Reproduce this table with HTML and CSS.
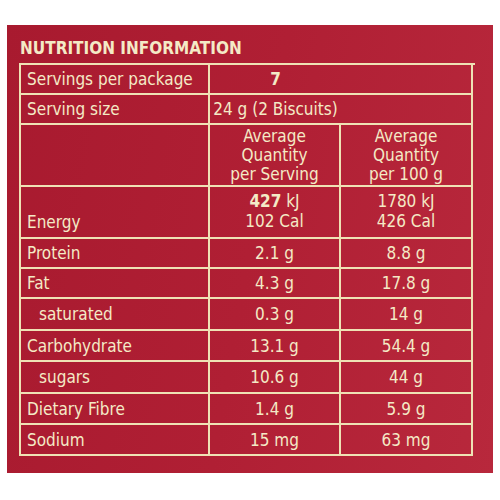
FILE: index.html
```html
<!DOCTYPE html>
<html>
<head>
<meta charset="utf-8">
<link rel="stylesheet" href="styles.css">
</head>
<body>
<div class="panel">
  <h1 class="title">NUTRITION INFORMATION</h1>
  <div class="grid">
    <div class="c lab">Servings per package</div>
    <div class="c span"><span class="inner b">7</span></div>
    <div class="c lab">Serving size</div>
    <div class="c span"><span class="inner">24 g (2 Biscuits)</span></div>

    <div class="c"></div>
    <div class="c head">Average<br>Quantity<br>per Serving</div>
    <div class="c head">Average<br>Quantity<br>per 100 g</div>

    <div class="c lab energy">Energy</div>
    <div class="c val two"><div><span class="b">427</span> kJ<br>102 Cal</div></div>
    <div class="c val two"><div>1780 kJ<br>426 Cal</div></div>

    <div class="c lab">Protein</div><div class="c val">2.1 g</div><div class="c val">8.8 g</div>
    <div class="c lab">Fat</div><div class="c val">4.3 g</div><div class="c val">17.8 g</div>
    <div class="c lab sub">saturated</div><div class="c val">0.3 g</div><div class="c val">14 g</div>
    <div class="c lab">Carbohydrate</div><div class="c val">13.1 g</div><div class="c val">54.4 g</div>
    <div class="c lab sub">sugars</div><div class="c val">10.6 g</div><div class="c val">44 g</div>
    <div class="c lab">Dietary Fibre</div><div class="c val">1.4 g</div><div class="c val">5.9 g</div>
    <div class="c lab">Sodium</div><div class="c val">15 mg</div><div class="c val">63 mg</div>
  </div>
</div>
</body>
</html>
```
FILE: styles.css
```css
html, body {
  margin: 0;
  padding: 0;
  background: #ffffff;
}
.panel {
  margin: 25px 7px 0 7px;
  width: 486px;
  height: 448px;
  box-sizing: border-box;
  padding: 13px 0 0 12px;
  background: linear-gradient(100deg, #a81a2f 0%, #b01f34 50%, #b8283c 100%);
  color: #f4eac6;
  font-family: "DejaVu Sans Condensed", "Liberation Sans Narrow", "DejaVu Sans", sans-serif;
}
.title {
  margin: 0 0 5px 1px;
  font-size: 17px;
  line-height: 20px;
  font-weight: bold;
  letter-spacing: 0;
}
.grid {
  display: grid;
  grid-template-columns: 189px 131px 132px;
  grid-template-rows: 30px 30px 62px 52px 30px 30px 32px 31px 32px 31px 31px;
  width: 454px;
  border-top: 2px solid #efe2b5;
  border-left: 2px solid #efe2b5;
  box-sizing: content-box;
  font-size: 17px;
}
.c {
  border-right: 2px solid #efe2b5;
  border-bottom: 2px solid #efe2b5;
  box-sizing: border-box;
  display: flex;
  align-items: center;
  line-height: 20px;
}
.lab {
  padding-left: 6px;
}
.sub {
  padding-left: 18px;
}
.span {
  grid-column: span 2;
}
.inner {
  display: block;
  width: 131px;
  text-align: center;
  white-space: nowrap;
}
.b {
  font-weight: bold;
}
.val {
  justify-content: center;
  text-align: center;
}
.head {
  align-items: flex-start;
  justify-content: center;
  text-align: center;
  padding-top: 2px;
  line-height: 19px;
}
.two {
  align-items: flex-start;
  padding-top: 4px;
  line-height: 20px;
}
.energy {
  align-items: flex-end;
  padding-bottom: 5px;
}
```
